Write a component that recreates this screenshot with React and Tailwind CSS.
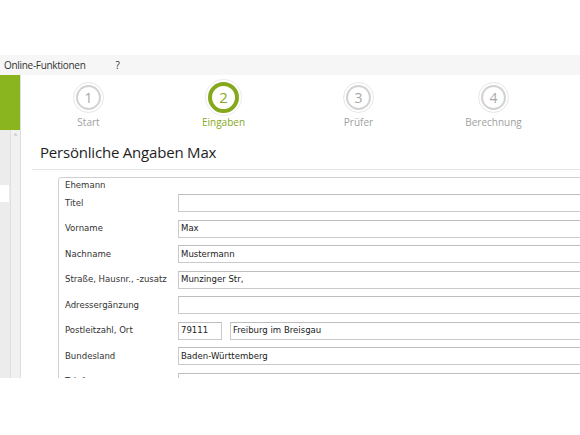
import React from "react";

const steps = [
  { n: 1, label: "Start" },
  { n: 2, label: "Eingaben", active: true },
  { n: 3, label: "Prüfer" },
  { n: 4, label: "Berechnung" },
];

const rows = [
  { label: "Titel", value: "" },
  { label: "Vorname", value: "Max" },
  { label: "Nachname", value: "Mustermann" },
  { label: "Straße, Hausnr., -zusatz", value: "Munzinger Str," },
  { label: "Adressergänzung", value: "" },
  { label: "Postleitzahl, Ort", plz: "79111", value: "Freiburg im Breisgau" },
  { label: "Bundesland", value: "Baden-Württemberg" },
  { label: "Telefon", value: "" },
];

const Step = ({ n, label, active }) => (
  <div className="w-[135px] flex flex-col items-center">
    {active ? (
      <div className="w-[37px] h-[37px] rounded-full border border-[#ececec] flex items-center justify-center">
        <div className="w-[31px] h-[31px] rounded-full border-[4px] border-[#85a81c] flex items-center justify-center text-[15px] text-[#85a81c]">
          {n}
        </div>
      </div>
    ) : (
      <div className="mt-[3px] w-[31px] h-[31px] rounded-full border border-[#e6e6e6] flex items-center justify-center">
        <div className="w-[25px] h-[25px] rounded-full border-[2px] border-[#d2d2d2] flex items-center justify-center text-[14px] text-[#a8a8a8]">
          {n}
        </div>
      </div>
    )}
    <div
      className={
        "text-[10px] leading-none " +
        (active ? "mt-[1px] text-[#85a81c]" : "mt-[4px] text-[#a0a0a0]")
      }
    >
      {label}
    </div>
  </div>
);

const Input = ({ value, className }) => (
  <div
    className={
      "h-[18px] border border-[#cacaca] border-t-[#bdbdbd] bg-white flex items-center px-[2px] text-[#222] " +
      className
    }
  >
    {value}
  </div>
);

const App = () => {
  return (
    <div
      className="w-[580px] h-[435px] bg-white overflow-hidden"
      style={{ fontFamily: "'Open Sans', sans-serif" }}
    >
      <div className="h-[55px]" />
      <div className="h-[20px] bg-[#f6f6f6] flex items-center text-[10px] tracking-[-0.3px] text-[#333]">
        <span className="ml-[4px]">Online-Funktionen</span>
        <span className="ml-[30px]">?</span>
      </div>
      <div className="flex h-[303px]">
        <div className="w-[21px] shrink-0 flex flex-col border-r border-[#dedede]">
          <div className="h-[55px] bg-[#8ab51f]" />
          <div className="flex flex-1">
            <div className="w-[10px] bg-[#ececec] flex flex-col">
              <div className="h-[55px]" />
              <div className="h-[17px] w-[9px] bg-white" />
            </div>
            <div className="flex-1 bg-[#f1f1f1] border-l border-[#e0e0e0] text-[6px] text-[#999] text-center leading-none pt-[2px]">
              ˄
            </div>
          </div>
        </div>
        <div className="flex-1 min-w-0 overflow-hidden">
          <div className="flex pt-[4px] h-[60px]">
            {steps.map((s) => (
              <Step key={s.n} {...s} />
            ))}
          </div>
          <div className="pl-[19px] text-[15px] tracking-[-0.2px] text-[#1e1e1e] leading-none pt-[10px]">
            Persönliche Angaben Max
          </div>
          <div className="ml-[11px] mt-[9px] border-t border-[#e4e4e4]" />
          <div
            className="ml-[37px] mt-[7px] w-[600px] border border-[#d0d0d0] rounded-tl-[3px] pl-[6px] pt-[1px] text-[9.5px] text-[#333]"
            style={{ fontFamily: "'DejaVu Sans Condensed', 'DejaVu Sans', sans-serif" }}
          >
            <div className="leading-[12px]">Ehemann</div>
            <div className="flex flex-col gap-[7.5px] mt-[3px]">
              {rows.map((r) => (
                <div key={r.label} className="flex items-center">
                  <div className="w-[113px] shrink-0">{r.label}</div>
                  {r.plz ? (
                    <div className="flex flex-1 gap-[8px]">
                      <Input value={r.plz} className="w-[44px]" />
                      <Input value={r.value} className="flex-1" />
                    </div>
                  ) : (
                    <Input value={r.value} className="flex-1" />
                  )}
                </div>
              ))}
            </div>
          </div>
        </div>
      </div>
    </div>
  );
};

export default App;
